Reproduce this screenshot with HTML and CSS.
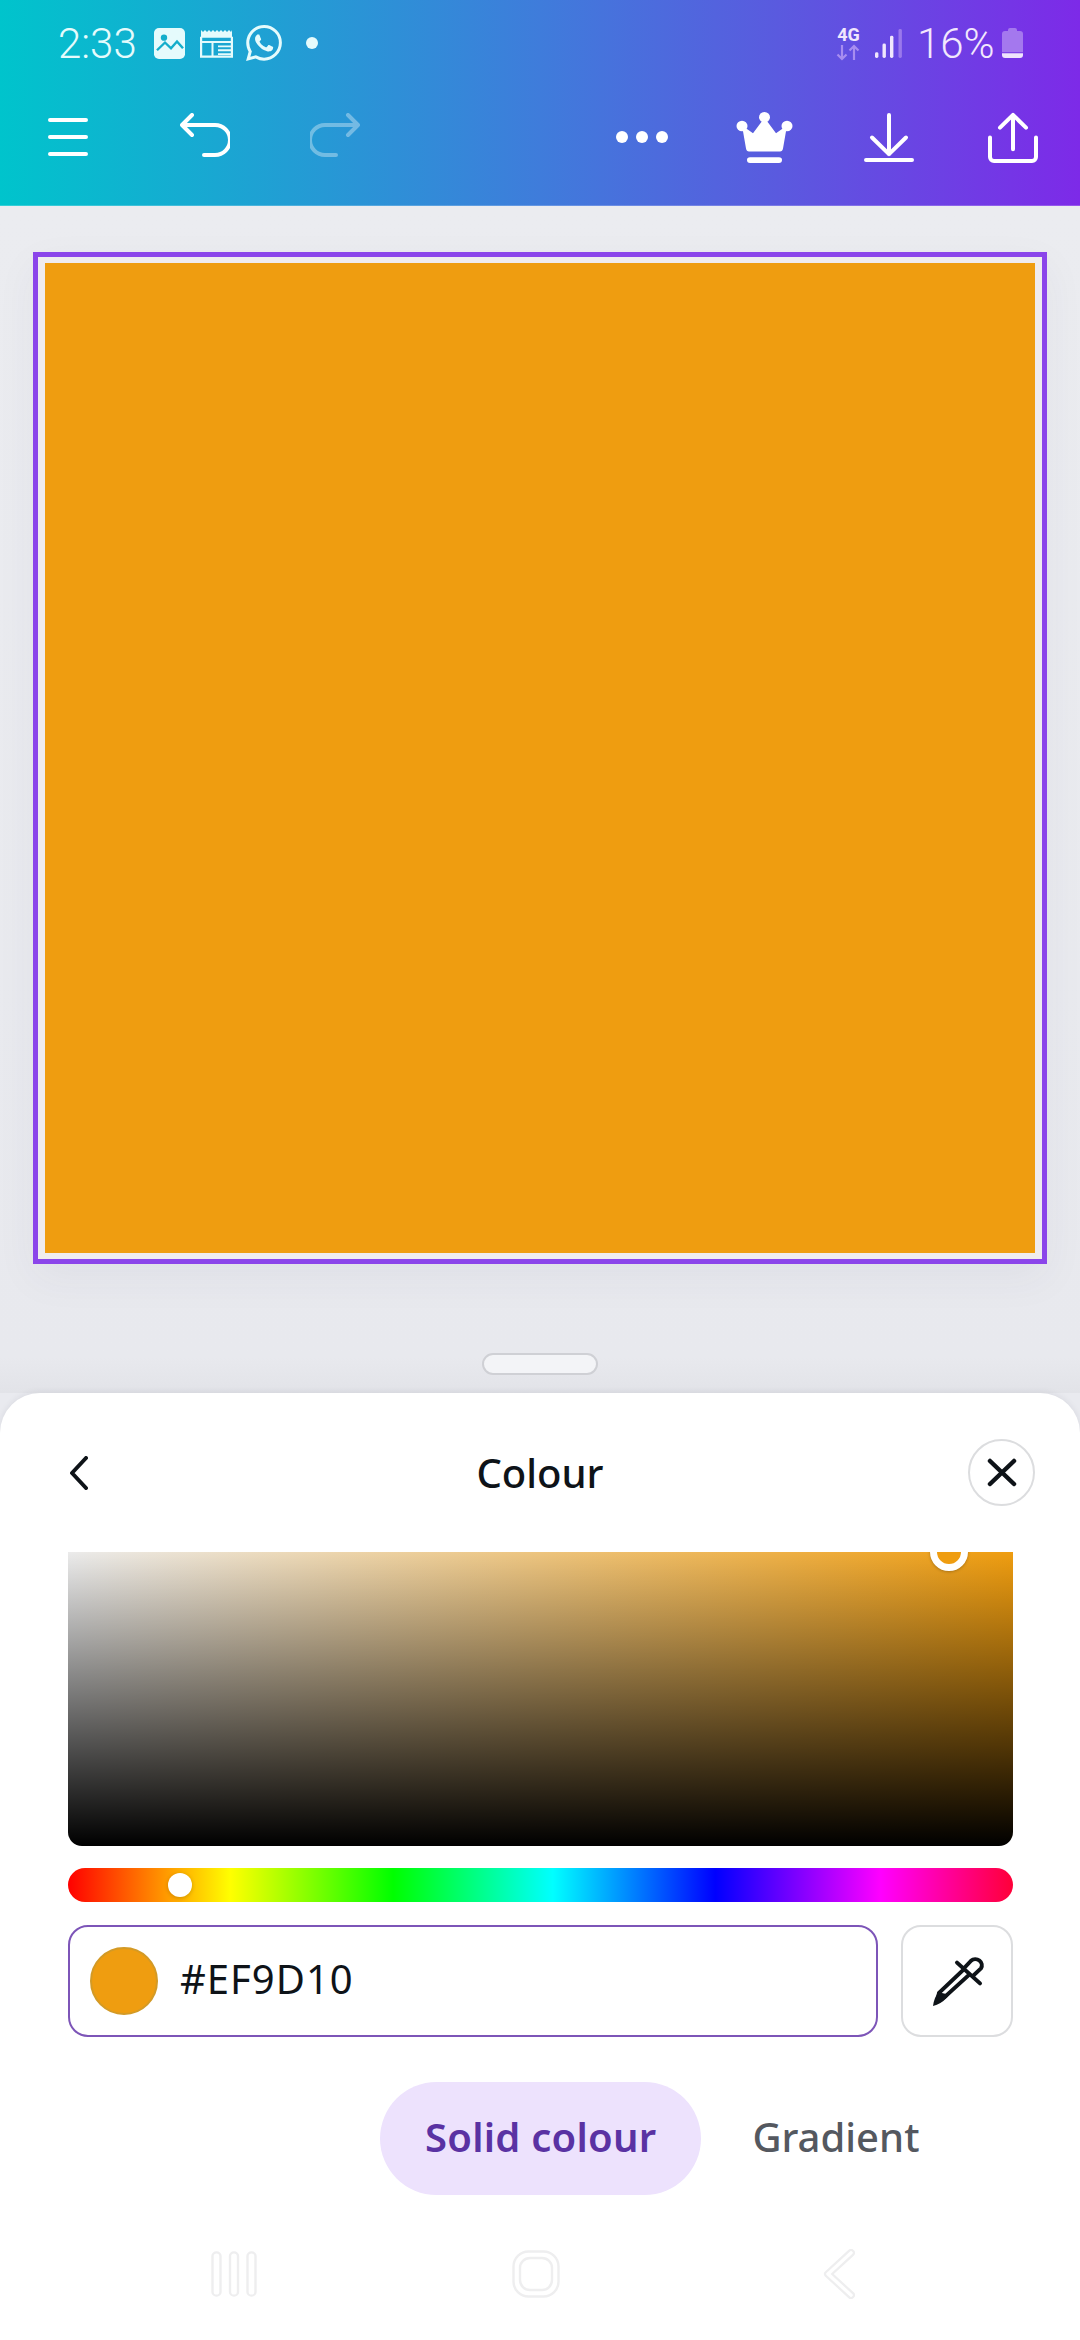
FILE: index.html
```html
<!DOCTYPE html>
<html lang="en">
  <head>
    <meta charset="UTF-8" />
    <meta name="viewport" content="width=device-width, initial-scale=1.0" />
    <title>Colour</title>
    <link rel="stylesheet" href="styles.css">
  </head>
  <body>
    <header class="top">
      <!-- status bar -->
      <div class="status">
        <span class="time">2:33</span>
        <svg class="st-photo" width="31" height="31" viewBox="0 0 31 32" preserveAspectRatio="none">
          <rect width="31" height="32" rx="5" fill="#e5fbfc" />
          <circle cx="10" cy="10" r="3.2" fill="#14aecb" />
          <path d="M3 23l8-8 6 6 6-7 6 7" fill="none" stroke="#14aecb" stroke-width="2.4" />
        </svg>
        <svg class="st-news" width="33" height="29" viewBox="0 0 33 30" preserveAspectRatio="none">
          <path d="M1 1l2 2 2-2 2 2 2-2 2 2 2-2 2 2 2-2 2 2 2-2 2 2 2-2 2 2 2-2 2 2 1-2v8H1z" fill="#e5fbfc" />
          <path d="M1 8v20.500h31V8" fill="none" stroke="#e5fbfc" stroke-width="2.400" />
          <path d="M2 13.500h29M12.500 13.500v15M18 18h13M18 22h13M18 26h13" fill="none" stroke="#e5fbfc" stroke-width="2" />
        </svg>
        <svg class="st-wa" width="36" height="36" viewBox="0 0 24 24">
          <path fill="#e5fbfc" d="M17.472 14.382c-.297-.149-1.758-.867-2.03-.967-.273-.099-.471-.148-.67.15-.197.297-.767.966-.94 1.164-.173.199-.347.223-.644.075-.297-.15-1.255-.463-2.39-1.475-.883-.788-1.48-1.761-1.653-2.059-.173-.297-.018-.458.13-.606.134-.133.298-.347.446-.52.149-.174.198-.298.298-.497.099-.198.05-.371-.025-.52-.075-.149-.669-1.612-.916-2.207-.242-.579-.487-.5-.669-.51-.173-.008-.371-.01-.57-.01-.198 0-.52.074-.792.372-.272.297-1.04 1.016-1.04 2.479 0 1.462 1.065 2.875 1.213 3.074.149.198 2.096 3.2 5.077 4.487.709.306 1.262.489 1.694.625.712.227 1.36.195 1.871.118.571-.085 1.758-.719 2.006-1.413.248-.694.248-1.289.173-1.413-.074-.124-.272-.198-.57-.347m-5.421 7.403h-.004a9.87 9.87 0 01-5.031-1.378l-.361-.214-3.741.982.998-3.648-.235-.374a9.86 9.86 0 01-1.51-5.26c.001-5.45 4.436-9.884 9.888-9.884 2.64 0 5.122 1.03 6.988 2.898a9.825 9.825 0 012.893 6.994c-.003 5.45-4.437 9.884-9.885 9.884m8.413-18.297A11.815 11.815 0 0012.05 0C5.495 0 .16 5.335.157 11.892c0 2.096.547 4.142 1.588 5.945L.057 24l6.305-1.654a11.882 11.882 0 005.683 1.448h.005c6.554 0 11.89-5.335 11.893-11.893a11.821 11.821 0 00-3.48-8.413z" />
        </svg>
        <span class="st-dot"></span>
        <div class="net">
          <span class="net-label">4G</span>
          <svg width="25" height="17" viewBox="0 0 25 17">
            <path d="M6 1v14M1.500 10.500L6 15l4.500-4.500M18 16V2M13.500 6.500L18 2l4.500 4.500" fill="none" stroke="#a78df0" stroke-width="2.200" />
          </svg>
        </div>
        <svg class="st-signal" width="27" height="29" viewBox="0 0 27 30" preserveAspectRatio="none">
          <rect x="0" y="24" width="3.400" height="6" rx="1.500" fill="#f0e6fd" />
          <rect x="7.500" y="15" width="3.400" height="15" rx="1.500" fill="#f0e6fd" />
          <rect x="15" y="7" width="3.400" height="23" rx="1.500" fill="#f0e6fd" />
          <rect x="23.500" y="0" width="3.400" height="30" rx="1.500" fill="#9a78ec" />
        </svg>
        <span class="pct">16%</span>
        <svg class="st-batt" width="21" height="30" viewBox="0 0 21 31" preserveAspectRatio="none">
          <path d="M6 3V2a2 2 0 0 1 2-2h5a2 2 0 0 1 2 2v1h3a3 3 0 0 1 3 3v19H0V6a3 3 0 0 1 3-3z" fill="#a478ee" />
          <path d="M0 26h21v2a3 3 0 0 1-3 3H3a3 3 0 0 1-3-3z" fill="#efe4fc" />
        </svg>
      </div>

      <!-- editor toolbar -->
      <div class="toolbar">
        <svg class="tb-menu" width="40" height="38" viewBox="0 0 40 38">
          <path d="M2 2h36M2 19h36M2 36h36" fill="none" stroke="#fff" stroke-width="4" stroke-linecap="round" />
        </svg>
        <svg class="tb-undo" width="50" height="44" viewBox="0 0 50 44">
          <path d="M12 2L2 12l10 10M3 12h32a13.500 13.500 0 0 1 0 30H24" fill="none" stroke="#fff" stroke-width="4" stroke-linecap="round" stroke-linejoin="round" />
        </svg>
        <svg class="tb-redo" width="50" height="44" viewBox="0 0 50 44">
          <path d="M38 2l10 10-10 10M47 12H15a13.500 13.500 0 0 0 0 30h11" fill="none" stroke="#fff" stroke-width="4" stroke-linecap="round" stroke-linejoin="round" />
        </svg>
        <div class="tb-more"><span></span><span></span><span></span></div>
        <svg class="tb-crown" width="57" height="51" viewBox="0 0 57 53" preserveAspectRatio="none">
          <circle cx="6" cy="14.500" r="5.500" fill="#fff" />
          <circle cx="28.500" cy="5.500" r="5.500" fill="#fff" />
          <circle cx="51" cy="14.500" r="5.500" fill="#fff" />
          <path d="M6 14l11 8L28.500 6 40 22l11-8-4 24q-.5 3-3 3H13q-2.500 0-3-3z" fill="#fff" />
          <rect x="11" y="47" width="35" height="6" rx="3" fill="#fff" />
        </svg>
        <svg class="tb-down" width="50" height="49" viewBox="0 0 50 50" preserveAspectRatio="none">
          <path d="M25 2v40M8 25l17 17 17-17M2 48h46" fill="none" stroke="#fff" stroke-width="4" stroke-linecap="round" stroke-linejoin="round" />
        </svg>
        <svg class="tb-share" width="50" height="51" viewBox="0 0 50 52" preserveAspectRatio="none">
          <path d="M25 38V3M12 16L25 3l13 13M2 26v20a4 4 0 0 0 4 4h38a4 4 0 0 0 4-4V26" fill="none" stroke="#fff" stroke-width="4" stroke-linecap="round" stroke-linejoin="round" />
        </svg>
      </div>
    </header>

    <main class="stage">
      <div class="selection">
        <div class="artboard"></div>
      </div>
      <div class="handle"></div>
    </main>

    <section class="sheet">
      <div class="sheet-head">
        <svg class="back" width="18" height="34" viewBox="0 0 18 34">
          <path d="M16 2L2 17l14 15" fill="none" stroke="#0e1318" stroke-width="4" stroke-linecap="round" stroke-linejoin="round" />
        </svg>
        <h2 class="sheet-title">Colour</h2>
        <button class="close" type="button">
          <svg width="30" height="29" viewBox="0 0 30 29">
            <path d="M3 3l24 23M27 3L3 26" fill="none" stroke="#0e1318" stroke-width="4.500" stroke-linecap="round" />
          </svg>
        </button>
      </div>

      <div class="picker">
        <span class="picker-thumb"></span>
      </div>

      <div class="hue">
        <span class="hue-thumb"></span>
      </div>

      <div class="hex-row">
        <div class="hex-input">
          <span class="swatch"></span>
          <span class="hex-value">#EF9D10</span>
        </div>
        <button class="dropper" type="button">
          <svg width="52" height="51" viewBox="0 0 52 54" preserveAspectRatio="none">
            <path d="M31 13l7-8a6.500 6.500 0 0 1 10 8l-8 8M24 7l23 22" fill="none" stroke="#0e1318" stroke-width="4" stroke-linecap="round" />
            <path d="M30 15L6 39l-1 6 6-1 25-24" fill="none" stroke="#0e1318" stroke-width="4" stroke-linejoin="round" />
            <path d="M6 37q5 5 12 2l-4 5Q8 51 0 53q1-9 6-16z" fill="#0e1318" />
          </svg>
        </button>
      </div>

      <div class="tabs">
        <span class="tab tab-active">Solid colour</span>
        <span class="tab">Gradient</span>
      </div>

      <!-- android nav -->
      <nav class="nav">
        <svg class="nav-recent" width="46" height="46" viewBox="0 0 46 50" preserveAspectRatio="none">
          <g fill="none" stroke="#eeeeef" stroke-width="2.400">
            <rect x="1.500" y="1.500" width="8" height="47" rx="4" />
            <rect x="19" y="1.500" width="8" height="47" rx="4" />
            <rect x="36.500" y="1.500" width="8" height="47" rx="4" />
          </g>
        </svg>
        <svg class="nav-home" width="48" height="48" viewBox="0 0 48 48">
          <rect x="1.500" y="1.500" width="45" height="45" rx="15" fill="none" stroke="#eeeeef" stroke-width="2.400" />
          <rect x="8" y="8" width="32" height="32" rx="10" fill="none" stroke="#eeeeef" stroke-width="2.400" />
        </svg>
        <svg class="nav-back" width="32" height="50" viewBox="0 0 32 52" preserveAspectRatio="none">
          <path d="M28 4L5 26l23 22" fill="none" stroke="#eeeeef" stroke-width="8" stroke-linecap="round" stroke-linejoin="round" />
          <path d="M28 4L5 26l23 22" fill="none" stroke="#fff" stroke-width="3.500" stroke-linecap="round" stroke-linejoin="round" />
        </svg>
      </nav>
    </section>
  </body>
</html>
```

FILE: styles.css
```css
* {
  box-sizing: border-box;
}

html,
body {
  margin: 0;
  padding: 0;
}

body {
  width: 1080px;
  height: 2340px;
  display: flex;
  flex-direction: column;
  overflow: hidden;
  background-color: #e9eaef;
  font-family: 'Noto Sans', 'Liberation Sans', sans-serif;
  color: #0e1318;
}

svg {
  display: block;
  flex: none;
}

button {
  background: #fff;
  padding: 0;
  display: flex;
  align-items: center;
  justify-content: center;
}

/* top bar */
.top {
  height: 206px;
  flex: none;
  background: linear-gradient(90deg, #00c4cc 0%, #3f7cdb 50%, #5a5adf 72%, #7d2ae8 100%);
  border-bottom: 1px solid rgba(255, 255, 255, 0.2);
}

.status {
  height: 86px;
  padding-left: 58px;
  display: flex;
  align-items: center;
  color: #e5fbfc;
  font-family: 'Roboto', sans-serif;
  font-weight: 300;
  font-size: 42px;
}

.time {
  width: 96px;
}

.st-photo {
  margin-right: 15px;
}

.st-news {
  margin-right: 13px;
}

.st-dot {
  width: 12px;
  height: 12px;
  margin-left: 24px;
  border-radius: 50%;
  background-color: #e5fbfc;
}

.net {
  margin-left: 518px;
  width: 25px;
  display: flex;
  flex-direction: column;
  align-items: center;
  gap: 1px;
}

.net-label {
  font-size: 18px;
  line-height: 17px;
  font-weight: 700;
  color: #f0e6fd;
}

.st-signal {
  margin-left: 14px;
}

.pct {
  margin-left: 15px;
  width: 85px;
  color: #f2e7fd;
}

.toolbar {
  height: 102px;
  padding-left: 48px;
  display: flex;
  align-items: center;
}

.tb-undo {
  margin-left: 92px;
  margin-top: -5px;
}

.tb-redo {
  margin-left: 80px;
  margin-top: -5px;
  opacity: 0.35;
}

.tb-more {
  margin-left: 256px;
  width: 52px;
  display: flex;
  justify-content: space-between;
}

.tb-more span {
  width: 12px;
  height: 12px;
  border-radius: 50%;
  background-color: #fff;
}

.tb-crown {
  margin-left: 68px;
}

.tb-down {
  margin-left: 71px;
}

.tb-share {
  margin-left: 74px;
}

/* canvas */
.stage {
  flex: 1;
  padding-top: 46px;
  display: flex;
  flex-direction: column;
  align-items: center;
  background: linear-gradient(180deg, #ebecf0 0%, #e8e9ee 97%, #e2e3e8 100%);
}

.selection {
  width: 1014px;
  height: 1012px;
  padding: 6px 7px;
  border: 5px solid #8b45ea;
  background-color: #efecee;
  box-shadow: 0 14px 40px rgba(60, 60, 90, 0.05);
}

.artboard {
  width: 100%;
  height: 100%;
  background-color: #ef9d10;
}

.handle {
  width: 116px;
  height: 22px;
  margin-top: 89px;
  border: 2px solid #cfd0d5;
  border-radius: 11px;
  background-color: #f3f4f7;
}

/* colour sheet */
.sheet {
  height: 947px;
  flex: none;
  display: flex;
  flex-direction: column;
  background-color: #fff;
  border-radius: 40px 40px 0 0;
  box-shadow: 0 -1px 6px rgba(40, 40, 70, 0.08);
}

.sheet-head {
  height: 159px;
  flex: none;
  padding: 0 45px 0 70px;
  display: grid;
  grid-template-columns: 1fr auto 1fr;
  align-items: center;
}

.sheet-title {
  margin: 0;
  margin-left: -25px;
  font-size: 40px;
  font-weight: 500;
}

.close {
  justify-self: end;
  width: 67px;
  height: 67px;
  border: 2px solid #dcdddf;
  border-radius: 50%;
}

.picker {
  position: relative;
  height: 294px;
  margin: 0 67px 0 68px;
  flex: none;
  overflow: hidden;
  border-radius: 0 0 14px 14px;
  background:
    linear-gradient(0deg, #000 0%, rgba(0, 0, 0, 0) 100%),
    linear-gradient(90deg, #ebebeb 0%, #ef9d10 100%);
}

.picker-thumb {
  position: absolute;
  left: 862px;
  top: -19px;
  width: 38px;
  height: 38px;
  border: 7px solid #fff;
  border-radius: 50%;
  background-color: #ef9d10;
  box-shadow: 0 1px 3px rgba(0, 0, 0, 0.25);
}

.hue {
  position: relative;
  height: 34px;
  margin: 22px 67px 0 68px;
  flex: none;
  border-radius: 17px;
  background: linear-gradient(90deg, #f00 0%, #ff0 17.2%, #0f0 34.4%, #0ff 51.3%, #00f 68.5%, #f0f 86%, #ff0038 100%);
}

.hue-thumb {
  position: absolute;
  left: 100px;
  top: 5px;
  width: 24px;
  height: 24px;
  border-radius: 50%;
  background-color: #fff;
  box-shadow: 0 1px 4px rgba(0, 0, 0, 0.2);
}

.hex-row {
  height: 112px;
  margin: 23px 67px 0 68px;
  flex: none;
  display: flex;
  gap: 23px;
}

.hex-input {
  flex: 1;
  padding-left: 20px;
  display: flex;
  align-items: center;
  gap: 22px;
  border: 2px solid #7d55b8;
  border-radius: 20px;
}

.swatch {
  width: 68px;
  height: 68px;
  border: 2px solid #d39a26;
  border-radius: 50%;
  background-color: #ef9d10;
}

.hex-value {
  padding-bottom: 4px;
  font-size: 40px;
  line-height: 1;
  letter-spacing: 1px;
}

.dropper {
  width: 112px;
  padding-left: 4px;
  border: 2px solid #dcdddf;
  border-radius: 20px;
}

.tabs {
  height: 113px;
  margin-top: 45px;
  padding-left: 380px;
  flex: none;
  display: flex;
  align-items: center;
}

.tab {
  margin-left: 6px;
  padding: 0 45px 5px;
  font-size: 40px;
  font-weight: 500;
  color: #54585f;
}

.tab-active {
  height: 113px;
  margin-left: 0;
  display: flex;
  align-items: center;
  border-radius: 57px;
  background-color: #ede2fd;
  font-weight: 600;
  letter-spacing: 0.25px;
  color: #5a32a3;
}

.nav {
  margin-top: 54px;
  padding-left: 211px;
  display: flex;
  align-items: center;
}

.nav-home {
  margin-left: 255px;
}

.nav-back {
  margin-left: 263px;
}
```
